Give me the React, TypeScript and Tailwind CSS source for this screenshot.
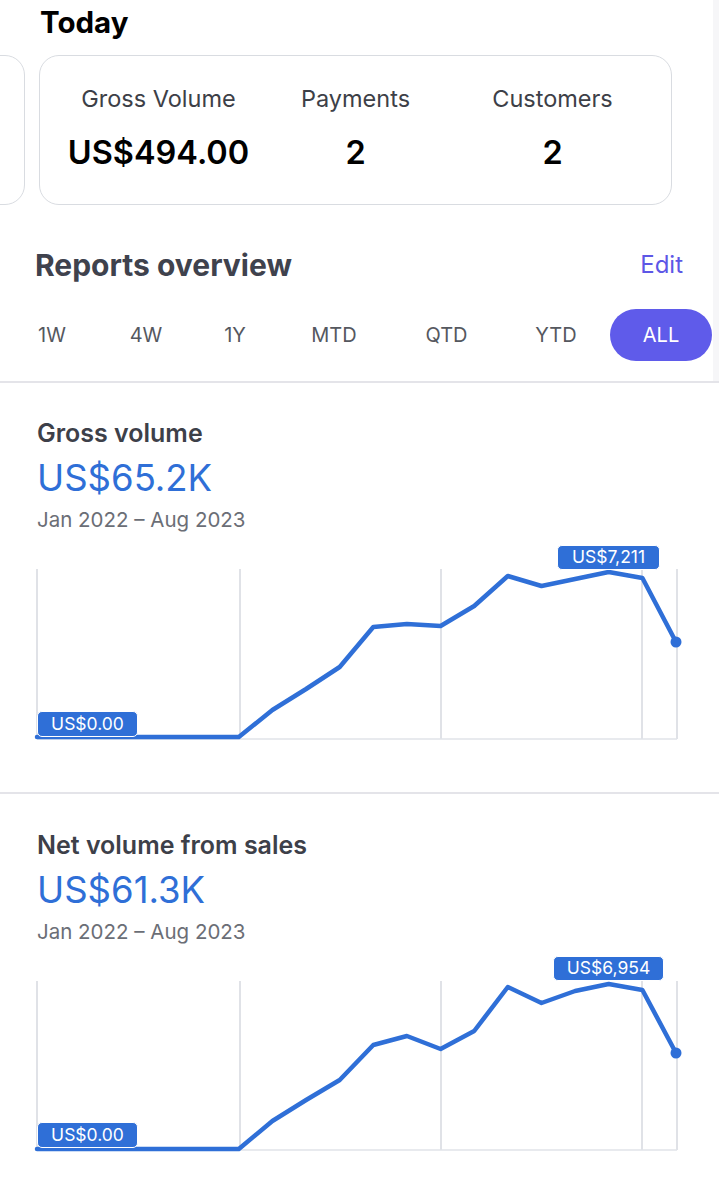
import React from "react";

const BLUE = "#2f6fd7";

type ChartProps = {
  ys: number[];
  baseline: number;
  peakLabel: string;
  peakBox: { left: number; top: number; width: number };
  zeroTop: number;
  height: string;
};

function Chart({ ys, baseline, peakLabel, peakBox, zeroTop, height }: ChartProps) {
  const xs = ys.map((_, k) => 37 + k * (639 / 19));
  const pts = ys.map((y, k) => `${xs[k].toFixed(1)},${y}`).join(" ");
  const grid = [37, 240, 441, 642, 677];
  return (
    <div className={`relative w-full ${height}`}>
      <svg width="719" height="240" className="absolute left-0 top-0">
        {grid.map((gx) => (
          <line key={gx} x1={gx} y1={36} x2={gx} y2={baseline} stroke="#d6d9df" strokeWidth={1.5} />
        ))}
        <line x1={37} y1={baseline} x2={677} y2={baseline} stroke="#e1e3e8" strokeWidth={1.5} />
        <polyline points={pts} fill="none" stroke={BLUE} strokeWidth={4.5} strokeLinejoin="round" strokeLinecap="round" />
        <circle cx={xs[19]} cy={ys[19]} r={5.5} fill={BLUE} />
      </svg>
      <div
        className="absolute flex h-[25px] items-center justify-center rounded-[5px] border border-white bg-[#2f6fd7] text-[17.5px] text-white"
        style={{ left: peakBox.left, top: peakBox.top, width: peakBox.width }}
      >
        {peakLabel}
      </div>
      <div
        className="absolute left-[37px] flex h-[26px] w-[101px] items-center justify-center rounded-[5px] border border-white bg-[#2f6fd7] text-[17.5px] text-white"
        style={{ top: zeroTop }}
      >
        US$0.00
      </div>
    </div>
  );
}

function Section({
  title,
  value,
  chart,
  topPad,
}: {
  title: string;
  value: string;
  chart: React.ReactNode;
  topPad: string;
}) {
  return (
    <div className={`border-t-2 border-[#e4e4e9] ${topPad}`}>
      <div className="pl-[37px]">
        <div className="text-[25px] font-semibold leading-[30px] text-[#3d4049]">{title}</div>
        <div className="mt-[10px] text-[36.5px] leading-[40px] text-[#2f6fd7]">{value}</div>
        <div className="mt-[9px] text-[20.5px] leading-[26px] text-[#6b6e76]">Jan 2022 – Aug 2023</div>
      </div>
      {chart}
    </div>
  );
}

export default function App() {
  const tabs: { label: string; w: string }[] = [
    { label: "1W", w: "w-[94px]" },
    { label: "4W", w: "w-[94px]" },
    { label: "1Y", w: "w-[84px]" },
    { label: "MTD", w: "w-[114px]" },
    { label: "QTD", w: "w-[111px]" },
    { label: "YTD", w: "w-[108px]" },
  ];

  const ys1 = [204, 204, 204, 204, 204, 204, 204, 177, 156, 134, 94, 91, 93, 73, 43, 53, 46, 39, 45, 109];
  const ys2 = [204, 204, 204, 204, 204, 204, 204, 176, 155, 135, 100, 91, 104, 86, 42, 58, 46, 39, 45, 108];

  return (
    <div className="w-[719px] min-h-[1200px] bg-white font-['Inter',sans-serif]">
      <div className="flex">
        <div className="w-[713px]">
          <div className="pl-[40px] pt-[4px] text-[29.5px] font-bold leading-[36px] text-black">Today</div>
          <div className="mt-[15px] flex gap-[14px] overflow-hidden">
            <div className="-ml-[275px] h-[150px] w-[300px] shrink-0 rounded-[20px] border-[1.5px] border-[#d9dce1]" />
            <div className="grid h-[150px] w-[633px] shrink-0 grid-cols-3 rounded-[20px] border-[1.5px] border-[#d9dce1] px-[20px] pt-[28px]">
              {[
                ["Gross Volume", "US$494.00"],
                ["Payments", "2"],
                ["Customers", "2"],
              ].map(([l, v]) => (
                <div key={l} className="flex flex-col items-center">
                  <div className="text-[23.5px] leading-[30px] text-[#3d4047]">{l}</div>
                  <div className="mt-[19px] whitespace-nowrap text-[32.5px] font-semibold leading-[40px] text-black">{v}</div>
                </div>
              ))}
            </div>
          </div>
          <div className="mt-[42px] flex items-center justify-between pl-[35px] pr-[30px]">
            <div className="text-[30px] font-bold leading-[36px] text-[#3f424d]">Reports overview</div>
            <div className="text-[24px] leading-[36px] text-[#5d57e6]">Edit</div>
          </div>
          <div className="mt-[26px] flex items-center pl-[5px] pb-[20px]">
            {tabs.map((t) => (
              <div key={t.label} className={`${t.w} text-center text-[20px] leading-[52px] text-[#55585f]`}>
                {t.label}
              </div>
            ))}
            <div className="h-[52px] w-[102px] rounded-full bg-[#5f5bea] text-center text-[20px] leading-[52px] text-white">
              ALL
            </div>
          </div>
        </div>
        <div className="w-[6px] bg-[#f6f6f8]" />
      </div>

      <Section
        title="Gross volume"
        value="US$65.2K"
        topPad="pt-[35px]"
        chart={
          <Chart
            ys={ys1}
            baseline={206}
            peakLabel="US$7,211"
            peakBox={{ left: 557, top: 12, width: 103 }}
            zeroTop={178}
            height="h-[259px]"
          />
        }
      />
      <Section
        title="Net volume from sales"
        value="US$61.3K"
        topPad="pt-[36px]"
        chart={
          <Chart
            ys={ys2}
            baseline={205}
            peakLabel="US$6,954"
            peakBox={{ left: 553, top: 11, width: 111 }}
            zeroTop={177}
            height="h-[240px]"
          />
        }
      />
    </div>
  );
}
